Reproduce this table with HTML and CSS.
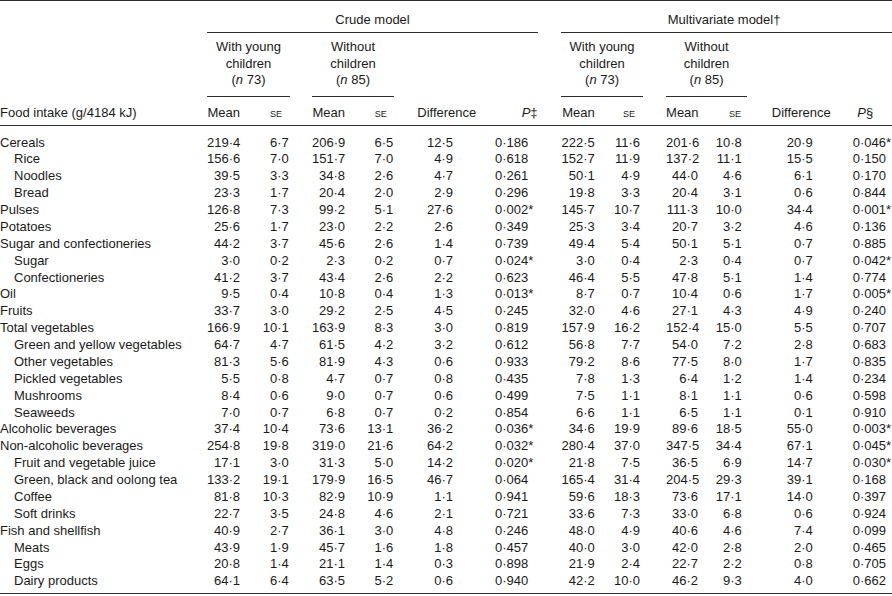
FILE: index.html
```html
<!DOCTYPE html>
<html lang="en">
<head>
<meta charset="utf-8">
<title>Food intake table</title>
<link rel="stylesheet" href="styles.css">
</head>
<body>
<table class="tbl">
<colgroup>
<col class="w-label"><col class="w-43"><col class="w-40"><col class="w-22"><col class="w-43"><col class="w-39"><col class="w-86"><col class="w-58"><col class="w-23"><col class="w-44"><col class="w-38"><col class="w-23"><col class="w-42"><col class="w-39"><col class="w-93"><col class="w-52">
</colgroup>
<thead>
<tr class="h1">
<td></td>
<th colspan="7" class="grp">Crude model</th>
<td></td>
<th colspan="7" class="grp grp-mv">Multivariate model†</th>
</tr>
<tr class="h2">
<td></td>
<th colspan="2" class="sub">With young<br>children<br>(<i>n</i> 73)</th>
<td></td>
<th colspan="2" class="sub">Without<br>children<br>(<i>n</i> 85)</th>
<td colspan="2"></td>
<td></td>
<th colspan="2" class="sub">With young<br>children<br>(<i>n</i> 73)</th>
<td></td>
<th colspan="2" class="sub">Without<br>children<br>(<i>n</i> 85)</th>
<td colspan="2"></td>
</tr>
<tr class="h3">
<th class="lab">Food intake (g/4184 kJ)</th>
<th>Mean</th>
<th class="se-h se1"><span class="sc">se</span></th>
<th></th>
<th>Mean</th>
<th class="se-h se2"><span class="sc">se</span></th>
<th class="diff-h d1">Difference</th>
<th class="p-h p1"><i>P</i>‡</th>
<th></th>
<th>Mean</th>
<th class="se-h se3"><span class="sc">se</span></th>
<th></th>
<th>Mean</th>
<th class="se-h se4"><span class="sc">se</span></th>
<th class="diff-h d2">Difference</th>
<th class="p-h p2"><i>P</i>§</th>
</tr>
</thead>
<tbody>
<tr><td>Cereals</td><td>219·4</td><td>6·7</td><td></td><td>206·9</td><td>6·5</td><td>12·5</td><td>0·186</td><td></td><td>222·5</td><td>11·6</td><td></td><td>201·6</td><td>10·8</td><td>20·9</td><td>0·046*</td></tr>
<tr><td class="ind">Rice</td><td>156·6</td><td>7·0</td><td></td><td>151·7</td><td>7·0</td><td>4·9</td><td>0·618</td><td></td><td>152·7</td><td>11·9</td><td></td><td>137·2</td><td>11·1</td><td>15·5</td><td>0·150</td></tr>
<tr><td class="ind">Noodles</td><td>39·5</td><td>3·3</td><td></td><td>34·8</td><td>2·6</td><td>4·7</td><td>0·261</td><td></td><td>50·1</td><td>4·9</td><td></td><td>44·0</td><td>4·6</td><td>6·1</td><td>0·170</td></tr>
<tr><td class="ind">Bread</td><td>23·3</td><td>1·7</td><td></td><td>20·4</td><td>2·0</td><td>2·9</td><td>0·296</td><td></td><td>19·8</td><td>3·3</td><td></td><td>20·4</td><td>3·1</td><td>0·6</td><td>0·844</td></tr>
<tr><td>Pulses</td><td>126·8</td><td>7·3</td><td></td><td>99·2</td><td>5·1</td><td>27·6</td><td>0·002*</td><td></td><td>145·7</td><td>10·7</td><td></td><td>111·3</td><td>10·0</td><td>34·4</td><td>0·001*</td></tr>
<tr><td>Potatoes</td><td>25·6</td><td>1·7</td><td></td><td>23·0</td><td>2·2</td><td>2·6</td><td>0·349</td><td></td><td>25·3</td><td>3·4</td><td></td><td>20·7</td><td>3·2</td><td>4·6</td><td>0·136</td></tr>
<tr><td>Sugar and confectioneries</td><td>44·2</td><td>3·7</td><td></td><td>45·6</td><td>2·6</td><td>1·4</td><td>0·739</td><td></td><td>49·4</td><td>5·4</td><td></td><td>50·1</td><td>5·1</td><td>0·7</td><td>0·885</td></tr>
<tr><td class="ind">Sugar</td><td>3·0</td><td>0·2</td><td></td><td>2·3</td><td>0·2</td><td>0·7</td><td>0·024*</td><td></td><td>3·0</td><td>0·4</td><td></td><td>2·3</td><td>0·4</td><td>0·7</td><td>0·042*</td></tr>
<tr><td class="ind">Confectioneries</td><td>41·2</td><td>3·7</td><td></td><td>43·4</td><td>2·6</td><td>2·2</td><td>0·623</td><td></td><td>46·4</td><td>5·5</td><td></td><td>47·8</td><td>5·1</td><td>1·4</td><td>0·774</td></tr>
<tr><td>Oil</td><td>9·5</td><td>0·4</td><td></td><td>10·8</td><td>0·4</td><td>1·3</td><td>0·013*</td><td></td><td>8·7</td><td>0·7</td><td></td><td>10·4</td><td>0·6</td><td>1·7</td><td>0·005*</td></tr>
<tr><td>Fruits</td><td>33·7</td><td>3·0</td><td></td><td>29·2</td><td>2·5</td><td>4·5</td><td>0·245</td><td></td><td>32·0</td><td>4·6</td><td></td><td>27·1</td><td>4·3</td><td>4·9</td><td>0·240</td></tr>
<tr><td>Total vegetables</td><td>166·9</td><td>10·1</td><td></td><td>163·9</td><td>8·3</td><td>3·0</td><td>0·819</td><td></td><td>157·9</td><td>16·2</td><td></td><td>152·4</td><td>15·0</td><td>5·5</td><td>0·707</td></tr>
<tr><td class="ind">Green and yellow vegetables</td><td>64·7</td><td>4·7</td><td></td><td>61·5</td><td>4·2</td><td>3·2</td><td>0·612</td><td></td><td>56·8</td><td>7·7</td><td></td><td>54·0</td><td>7·2</td><td>2·8</td><td>0·683</td></tr>
<tr><td class="ind">Other vegetables</td><td>81·3</td><td>5·6</td><td></td><td>81·9</td><td>4·3</td><td>0·6</td><td>0·933</td><td></td><td>79·2</td><td>8·6</td><td></td><td>77·5</td><td>8·0</td><td>1·7</td><td>0·835</td></tr>
<tr><td class="ind">Pickled vegetables</td><td>5·5</td><td>0·8</td><td></td><td>4·7</td><td>0·7</td><td>0·8</td><td>0·435</td><td></td><td>7·8</td><td>1·3</td><td></td><td>6·4</td><td>1·2</td><td>1·4</td><td>0·234</td></tr>
<tr><td class="ind">Mushrooms</td><td>8·4</td><td>0·6</td><td></td><td>9·0</td><td>0·7</td><td>0·6</td><td>0·499</td><td></td><td>7·5</td><td>1·1</td><td></td><td>8·1</td><td>1·1</td><td>0·6</td><td>0·598</td></tr>
<tr><td class="ind">Seaweeds</td><td>7·0</td><td>0·7</td><td></td><td>6·8</td><td>0·7</td><td>0·2</td><td>0·854</td><td></td><td>6·6</td><td>1·1</td><td></td><td>6·5</td><td>1·1</td><td>0·1</td><td>0·910</td></tr>
<tr><td>Alcoholic beverages</td><td>37·4</td><td>10·4</td><td></td><td>73·6</td><td>13·1</td><td>36·2</td><td>0·036*</td><td></td><td>34·6</td><td>19·9</td><td></td><td>89·6</td><td>18·5</td><td>55·0</td><td>0·003*</td></tr>
<tr><td>Non-alcoholic beverages</td><td>254·8</td><td>19·8</td><td></td><td>319·0</td><td>21·6</td><td>64·2</td><td>0·032*</td><td></td><td>280·4</td><td>37·0</td><td></td><td>347·5</td><td>34·4</td><td>67·1</td><td>0·045*</td></tr>
<tr><td class="ind">Fruit and vegetable juice</td><td>17·1</td><td>3·0</td><td></td><td>31·3</td><td>5·0</td><td>14·2</td><td>0·020*</td><td></td><td>21·8</td><td>7·5</td><td></td><td>36·5</td><td>6·9</td><td>14·7</td><td>0·030*</td></tr>
<tr><td class="ind">Green, black and oolong tea</td><td>133·2</td><td>19·1</td><td></td><td>179·9</td><td>16·5</td><td>46·7</td><td>0·064</td><td></td><td>165·4</td><td>31·4</td><td></td><td>204·5</td><td>29·3</td><td>39·1</td><td>0·168</td></tr>
<tr><td class="ind">Coffee</td><td>81·8</td><td>10·3</td><td></td><td>82·9</td><td>10·9</td><td>1·1</td><td>0·941</td><td></td><td>59·6</td><td>18·3</td><td></td><td>73·6</td><td>17·1</td><td>14·0</td><td>0·397</td></tr>
<tr><td class="ind">Soft drinks</td><td>22·7</td><td>3·5</td><td></td><td>24·8</td><td>4·6</td><td>2·1</td><td>0·721</td><td></td><td>33·6</td><td>7·3</td><td></td><td>33·0</td><td>6·8</td><td>0·6</td><td>0·924</td></tr>
<tr><td>Fish and shellfish</td><td>40·9</td><td>2·7</td><td></td><td>36·1</td><td>3·0</td><td>4·8</td><td>0·246</td><td></td><td>48·0</td><td>4·9</td><td></td><td>40·6</td><td>4·6</td><td>7·4</td><td>0·099</td></tr>
<tr><td class="ind">Meats</td><td>43·9</td><td>1·9</td><td></td><td>45·7</td><td>1·6</td><td>1·8</td><td>0·457</td><td></td><td>40·0</td><td>3·0</td><td></td><td>42·0</td><td>2·8</td><td>2·0</td><td>0·465</td></tr>
<tr><td class="ind">Eggs</td><td>20·8</td><td>1·4</td><td></td><td>21·1</td><td>1·4</td><td>0·3</td><td>0·898</td><td></td><td>21·9</td><td>2·4</td><td></td><td>22·7</td><td>2·2</td><td>0·8</td><td>0·705</td></tr>
<tr><td class="ind">Dairy products</td><td>64·1</td><td>6·4</td><td></td><td>63·5</td><td>5·2</td><td>0·6</td><td>0·940</td><td></td><td>42·2</td><td>10·0</td><td></td><td>46·2</td><td>9·3</td><td>4·0</td><td>0·662</td></tr>
</tbody>
</table>
</body>
</html>
```

FILE: styles.css
```css
html, body {
  margin: 0;
  padding: 0;
  background: #ffffff;
}

body {
  font-family: "Liberation Sans", Arial, sans-serif;
  font-size: 13px;
  color: #1a1a1a;
}

.tbl {
  width: 892px;
  table-layout: fixed;
  border-collapse: separate;
  border-spacing: 0;
  border-top: 1px solid #2f2f2f;
  border-bottom: 1px solid #2f2f2f;
}

.w-label { width: 207px; }
.w-22 { width: 22px; }
.w-23 { width: 23px; }
.w-38 { width: 38px; }
.w-39 { width: 39px; }
.w-40 { width: 40px; }
.w-42 { width: 42px; }
.w-43 { width: 43px; }
.w-44 { width: 44px; }
.w-52 { width: 52px; }
.w-58 { width: 58px; }
.w-86 { width: 86px; }
.w-93 { width: 93px; }

.tbl th,
.tbl td {
  padding: 0;
  line-height: 16.25px;
  font-weight: normal;
  white-space: nowrap;
  vertical-align: top;
}

.tbl i {
  font-style: italic;
}

/* header row 1: model groups */
.tbl .h1 th,
.tbl .h1 td {
  padding-top: 11px;
  padding-bottom: 4px;
}

.grp {
  text-align: center;
  border-bottom: 1px solid #2f2f2f;
}

.tbl .grp-mv {
  padding-right: 5px;
}

/* header row 2: sample groups */
.tbl .h2 th,
.tbl .h2 td {
  padding-top: 6px;
  padding-bottom: 8px;
}

.sub {
  text-align: center;
  border-bottom: 1px solid #2f2f2f;
}

/* header row 3: column labels */
.tbl .h3 th {
  padding-top: 8px;
  padding-bottom: 3.75px;
  border-bottom: 1px solid #2f2f2f;
  text-align: right;
}

.tbl .h3 .lab {
  text-align: left;
}

.sc {
  font-variant: small-caps;
}

/* body */
.tbl tbody td {
  line-height: 16.87px;
  text-align: right;
}

.tbl tbody tr:first-child td {
  padding-top: 8.5px;
}

.tbl tbody tr:last-child td {
  padding-bottom: 3.3px;
}

.tbl tbody td:first-child {
  text-align: left;
}

.tbl tbody td.ind {
  padding-left: 14px;
}

/* column offsets (numbers) */
.tbl tbody td:nth-child(2),
.tbl .h3 th:nth-child(2) { padding-right: 10px; }
.tbl tbody td:nth-child(3) { padding-right: 1.3px; }
.tbl tbody td:nth-child(5),
.tbl .h3 th:nth-child(5) { padding-right: 10px; }
.tbl tbody td:nth-child(6) { padding-right: 0.7px; }
.tbl tbody td:nth-child(7) { padding-right: 27px; }
.tbl tbody td:nth-child(8) { text-align: left; padding-left: 15px; }
.tbl tbody td:nth-child(10),
.tbl .h3 th:nth-child(10) { padding-right: 10.3px; }
.tbl tbody td:nth-child(11) { padding-right: 3px; }
.tbl tbody td:nth-child(13),
.tbl .h3 th:nth-child(13) { padding-right: 10px; }
.tbl tbody td:nth-child(14) { padding-right: 5.3px; }
.tbl tbody td:nth-child(15) { padding-right: 27.3px; }
.tbl tbody td:nth-child(16) { text-align: left; padding-left: 12.7px; }

/* header label offsets */
.tbl .h3 .se1 { padding-right: 8px; }
.tbl .h3 .se2 { padding-right: 7.3px; }
.tbl .h3 .se3 { padding-right: 8px; }
.tbl .h3 .se4 { padding-right: 6px; }
.tbl .h3 .d1 { text-align: left; padding-left: 23.3px; }
.tbl .h3 .d2 { text-align: left; padding-left: 24.7px; }
.tbl .h3 .p-h { text-align: left; }
.tbl .h3 .p1 { padding-left: 41.7px; }
.tbl .h3 .p2 { padding-left: 17.3px; }
```
